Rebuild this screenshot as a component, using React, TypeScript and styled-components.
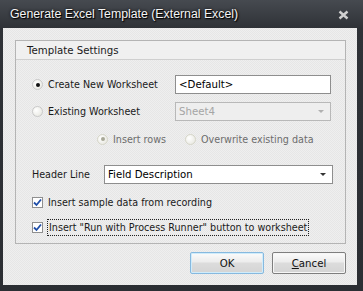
import React from 'react';
import styled, { createGlobalStyle } from 'styled-components';

const GlobalStyle = createGlobalStyle`
  html, body {
    margin: 0;
    padding: 0;
    background: #2b2e33;
  }
  body {
    font-family: Tahoma, "DejaVu Sans", "Liberation Sans", sans-serif;
  }
`;

const Frame = styled.div`
  width: 363px;
  height: 291px;
  box-sizing: border-box;
  display: flex;
  flex-direction: column;
  background: linear-gradient(#464a50, #2f3237 28px, #2b2e33);
  padding: 0 6px 6px 3px;
`;

const TitleBar = styled.div`
  height: 29px;
  display: flex;
  align-items: center;
  justify-content: space-between;
  padding: 0 8px 0 7px;
  color: #f4f4f4;
  font-family: "Liberation Sans", Arial, sans-serif;
  font-size: 12.3px;
  text-shadow: 0 0 3px #000, 1px 1px 1px #000;
`;

const CloseGlyph = styled.svg`
  width: 11px;
  height: 10px;
  margin-top: 1px;
`;

const Body = styled.div`
  flex: 1;
  display: flex;
  flex-direction: column;
  padding: 12px 11px 11px 12px;
  background-color: #ebebeb;
  background-image: repeating-conic-gradient(#e6e6e6 0 25%, #efefef 0 50%);
  background-size: 2px 2px;
  font-family: "DejaVu Sans", Verdana, sans-serif;
  font-size: 9.6px;
  color: #1a1a1a;
`;

const Group = styled.div`
  height: 204px;
  box-sizing: border-box;
  border: 1px solid #b4b4b4;
  display: flex;
  flex-direction: column;
`;

const GroupHeader = styled.div`
  height: 18px;
  display: flex;
  align-items: center;
  padding-left: 11px;
  background: #f0f0f0;
  border-bottom: 1px solid #cfcfcf;
  font-size: 10.2px;
`;

const Row = styled.div<{ $h: number; $top: number; $indent?: number }>`
  height: ${(p) => p.$h}px;
  margin-top: ${(p) => p.$top}px;
  padding-left: ${(p) => p.$indent ?? 16}px;
  display: flex;
  align-items: center;
`;

const Choice = styled.label<{ $w?: number; $disabled?: boolean }>`
  display: flex;
  align-items: center;
  gap: 5px;
  width: ${(p) => (p.$w ? `${p.$w}px` : 'auto')};
  color: ${(p) => (p.$disabled ? '#6d6d6d' : '#1a1a1a')};
`;

const Radio = styled.span<{ $on?: boolean; $disabled?: boolean }>`
  width: 11px;
  height: 11px;
  border-radius: 50%;
  box-sizing: border-box;
  border: 1px solid ${(p) => (p.$disabled ? '#d6d6c8' : '#c9c9c9')};
  background: radial-gradient(circle at 35% 35%, #ffffff, #e4e4dc);
  display: flex;
  align-items: center;
  justify-content: center;
  &::after {
    content: '';
    display: ${(p) => (p.$on ? 'block' : 'none')};
    width: 4px;
    height: 4px;
    border-radius: 50%;
    background: ${(p) => (p.$disabled ? '#a8a898' : '#111')};
  }
`;

const Check = styled.span`
  width: 11px;
  height: 11px;
  box-sizing: border-box;
  border: 1px solid #8f8f8f;
  background: #fff;
  display: flex;
  align-items: center;
  justify-content: center;
`;

const Field = styled.div<{ $w: number; $disabled?: boolean }>`
  width: ${(p) => p.$w}px;
  height: 19px;
  box-sizing: border-box;
  border: 1px solid ${(p) => (p.$disabled ? '#b8b8b8' : '#8e8e8e')};
  background: ${(p) => (p.$disabled ? '#eeeeee' : '#ffffff')};
  color: ${(p) => (p.$disabled ? '#a5a5a5' : '#000')};
  display: flex;
  align-items: center;
  justify-content: space-between;
  padding: 0 6px 0 3px;
  font-size: 10.2px;
`;

const Arrow = styled.span<{ $disabled?: boolean }>`
  width: 0;
  height: 0;
  border-left: 3px solid transparent;
  border-right: 3px solid transparent;
  border-top: 3px solid ${(p) => (p.$disabled ? '#b0b0b0' : '#333')};
`;

const FocusLabel = styled.span`
  outline: 1px dotted #222;
  padding: 2px 1px 2px 1px;
`;

const Footer = styled.div`
  margin-top: 8px;
  display: flex;
  justify-content: flex-end;
  gap: 8px;
`;

const Button = styled.button<{ $default?: boolean }>`
  width: 74px;
  height: 22px;
  box-sizing: border-box;
  border: 1px solid ${(p) => (p.$default ? '#86b9df' : '#7e7e7e')};
  border-radius: 2px;
  background: linear-gradient(#fbfbfb, #ececec 45%, #dcdcdc 50%, #d4d4d4);
  box-shadow: inset 0 0 0 1px ${(p) => (p.$default ? '#d0ecfb' : '#f6f6f6')};
  font-family: "DejaVu Sans", Verdana, sans-serif;
  font-size: 10.2px;
  color: #111;
  padding: 0;
`;

const CheckMark = () => (
  <Check>
    <svg width="9" height="9" viewBox="0 0 9 9">
      <path d="M1 4.5 L3.5 7 L8 1.5" stroke="#1f4ea8" strokeWidth="1.8" fill="none" />
    </svg>
  </Check>
);

const App = () => (
  <Frame>
    <GlobalStyle />
    <TitleBar>
      <span>Generate Excel Template (External Excel)</span>
      <CloseGlyph viewBox="0 0 11 10">
        <path d="M1.5 1.5 L9.5 8.5 M9.5 1.5 L1.5 8.5" stroke="#d0d0d0" strokeWidth="2.4" />
      </CloseGlyph>
    </TitleBar>
    <Body>
      <Group>
        <GroupHeader>Template Settings</GroupHeader>
        <Row $h={19} $top={15}>
          <Choice $w={143}>
            <Radio $on />
            Create New Worksheet
          </Choice>
          <Field $w={156}>&lt;Default&gt;</Field>
        </Row>
        <Row $h={19} $top={8}>
          <Choice $w={143}>
            <Radio />
            Existing Worksheet
          </Choice>
          <Field $w={156} $disabled>
            Sheet4
            <Arrow $disabled />
          </Field>
        </Row>
        <Row $h={16} $top={10} $indent={81}>
          <Choice $w={88} $disabled>
            <Radio $on $disabled />
            Insert rows
          </Choice>
          <Choice $disabled>
            <Radio $disabled />
            Overwrite existing data
          </Choice>
        </Row>
        <Row $h={19} $top={18}>
          <Choice $w={72}>Header Line</Choice>
          <Field $w={229}>
            Field Description
            <Arrow />
          </Field>
        </Row>
        <Row $h={16} $top={10}>
          <Choice>
            <CheckMark />
            Insert sample data from recording
          </Choice>
        </Row>
        <Row $h={18} $top={8}>
          <Choice>
            <CheckMark />
            <FocusLabel>Insert "Run with Process Runner" button to worksheet</FocusLabel>
          </Choice>
        </Row>
      </Group>
      <Footer>
        <Button $default>OK</Button>
        <Button>
          <u>C</u>ancel
        </Button>
      </Footer>
    </Body>
  </Frame>
);

export default App;
